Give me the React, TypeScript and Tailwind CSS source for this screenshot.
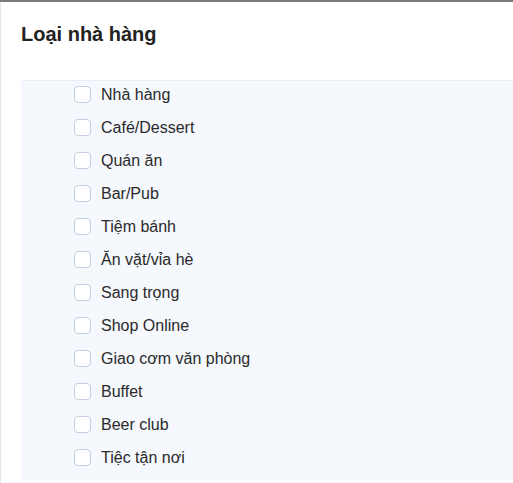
import React, { useState } from "react";

const TYPES = [
  "Nhà hàng",
  "Café/Dessert",
  "Quán ăn",
  "Bar/Pub",
  "Tiệm bánh",
  "Ăn vặt/vỉa hè",
  "Sang trọng",
  "Shop Online",
  "Giao cơm văn phòng",
  "Buffet",
  "Beer club",
  "Tiệc tận nơi",
];

export default function App() {
  const [checked, setChecked] = useState<string[]>([]);

  function toggle(name: string) {
    setChecked((c) => (c.includes(name) ? c.filter((x) => x !== name) : [...c, name]));
  }

  return (
    <div className="h-[483px] w-[513px] overflow-hidden bg-white font-['Liberation_Sans',Arial,sans-serif]">
      <div className="h-[2px] bg-[#7b7b7b]" />
      <div className="flex h-[481px] flex-col border-l border-[#e3eaf4]">
        {/* HEADER */}
        <h3 className="px-5 pt-[20px] text-[20px] font-bold leading-6 text-[#222]">
          Loại nhà hàng
        </h3>

        {/* LIST */}
        <div className="mt-[34px] ml-5 flex flex-col gap-[9px] border-t border-[#e9eff7] bg-[#f5f8fd] pt-[1px] pb-[11px] pl-[53px]">
          {TYPES.map((t) => (
            <label key={t} className="flex h-6 cursor-pointer items-center gap-[10px]">
              <input
                type="checkbox"
                checked={checked.includes(t)}
                onChange={() => toggle(t)}
                className="h-[17px] w-[17px] shrink-0 appearance-none rounded-[4px] border border-[#c3cce0] bg-white checked:bg-[#3b82f6]"
              />
              <span className="pt-[2px] text-[16px] leading-6 text-[#2a2a2a]">{t}</span>
            </label>
          ))}
        </div>
      </div>
    </div>
  );
}
